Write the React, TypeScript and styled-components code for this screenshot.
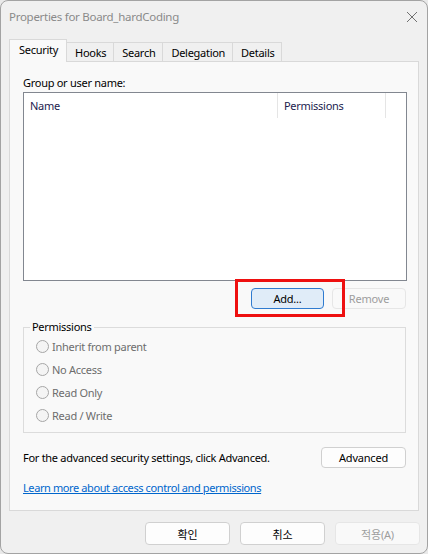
import React from "react";
import styled, { createGlobalStyle, css } from "styled-components";

const GlobalStyle = createGlobalStyle`
  html, body {
    margin: 0;
    padding: 0;
    background: #e9e9e9;
  }
  * {
    box-sizing: border-box;
  }
`;

const FONT = `"Noto Sans", "Noto Sans CJK KR", sans-serif`;

const Window = styled.div`
  width: 428px;
  height: 554px;
  display: flex;
  flex-direction: column;
  background: #f0f0f0;
  border: 1px solid #a3a3a3;
  border-radius: 8px;
  font-family: ${FONT};
  font-size: 11px;
  letter-spacing: -0.28px;
  color: #000;
  overflow: hidden;
`;

const TitleBar = styled.div`
  height: 31px;
  display: flex;
  align-items: center;
  justify-content: space-between;
  padding: 0 9px 0 8px;
  flex-shrink: 0;
`;

const Title = styled.span`
  color: #8a8a8a;
  font-size: 11.5px;
`;

const CloseIcon = () => (
  <svg width="12" height="12" viewBox="0 0 12 12">
    <path d="M1 1 L11 11 M11 1 L1 11" stroke="#707070" strokeWidth="1" />
  </svg>
);

const TabRow = styled.div`
  display: flex;
  align-items: flex-end;
  margin: 7px 0 -1px 8px;
  position: relative;
  z-index: 1;
`;

const Tab = styled.div<{ $active?: boolean }>`
  height: 20px;
  padding: 0 7px 0 8px;
  display: flex;
  align-items: center;
  border: 1px solid #d9d9d9;
  background: #f0f0f0;
  margin-left: -1px;
  white-space: nowrap;
  &:first-child {
    margin-left: 0;
  }
  ${({ $active }) =>
    $active &&
    css`
      height: 23px;
      border-bottom: none;
      background: #f9f9f9;
      padding: 0 8px 3px 9px;
      position: relative;
      z-index: 2;
    `}
`;

const Panel = styled.div`
  height: 450px;
  margin: 0 8px 0 8px;
  border: 1px solid #d9d9d9;
  background: #f9f9f9;
  display: flex;
  flex-direction: column;
  padding: 13px 11px 0 13px;
`;

const Label = styled.div`
  height: 16px;
  line-height: 16px;
`;

const ListBox = styled.div`
  margin-top: 1px;
  height: 189px;
  border: 1px solid #828790;
  background: #fff;
`;

const ListHeader = styled.div`
  display: grid;
  grid-template-columns: 254px 108px 1fr;
  height: 25px;
`;

const HeaderCell = styled.div`
  display: flex;
  align-items: center;
  padding-left: 6px;
  color: #1c1c4e;
  border-right: 1px solid #e5e5e5;
  &:last-child {
    border-right: none;
  }
`;

const ButtonRow = styled.div`
  display: flex;
  justify-content: flex-end;
  gap: 8px;
  margin: 7px 1px 0 0;
`;

const Button = styled.button<{ $variant?: "default" | "accent" | "disabled"; $w: number; $h?: number }>`
  width: ${({ $w }) => $w}px;
  height: ${({ $h }) => $h ?? 21}px;
  font-family: ${FONT};
  font-size: 11px;
  letter-spacing: -0.2px;
  border: 1px solid #d0d0d0;
  border-radius: 4px;
  background: #fdfdfd;
  color: #000;
  padding: 0;
  ${({ $variant }) =>
    $variant === "accent" &&
    css`
      background: #e0ecf8;
      border-color: #2f7bd0;
    `}
  ${({ $variant }) =>
    $variant === "disabled" &&
    css`
      background: #f9f9f9;
      border-color: #e6e6e6;
      color: #9d9d9d;
    `}
`;

const Highlighted = styled.div`
  position: relative;
  display: flex;
`;

const Highlight = styled.span`
  position: absolute;
  left: -16px;
  top: -9px;
  width: 110px;
  height: 38px;
  border: 3px solid #ee1010;
  pointer-events: none;
`;

const GroupBox = styled.div`
  margin: 18px 1px 0 0;
  border: 1px solid #dcdcdc;
  display: flex;
  flex-direction: column;
  padding: 0 0 5px 12px;
`;

const Legend = styled.span`
  align-self: flex-start;
  margin: -9px 0 0 -6px;
  padding: 0 2px;
  height: 16px;
  line-height: 16px;
  background: #f9f9f9;
`;

const RadioRow = styled.div`
  height: 23px;
  display: flex;
  align-items: center;
  gap: 3px;
  color: #6d6d6d;
`;

const RadioCircle = styled.span`
  width: 13px;
  height: 13px;
  border-radius: 50%;
  border: 1px solid #a6a6a6;
  background: #f4f4f4;
`;

const AdvancedRow = styled.div`
  display: flex;
  align-items: center;
  justify-content: space-between;
  margin: 14px 1px 0 0;
`;

const Link = styled.a`
  margin-top: 12px;
  line-height: 16px;
  color: #0066cc;
  text-decoration: underline;
  align-self: flex-start;
  letter-spacing: -0.4px;
`;

const Footer = styled.div`
  display: flex;
  justify-content: flex-end;
  gap: 10px;
  margin: 11px 7px 0 0;
`;

const permissions = ["Inherit from parent", "No Access", "Read Only", "Read / Write"];

export default function App() {
  return (
    <>
      <GlobalStyle />
      <Window>
        <TitleBar>
          <Title>Properties for Board_hardCoding</Title>
          <CloseIcon />
        </TitleBar>
        <TabRow>
          <Tab $active>Security</Tab>
          <Tab>Hooks</Tab>
          <Tab>Search</Tab>
          <Tab>Delegation</Tab>
          <Tab>Details</Tab>
        </TabRow>
        <Panel>
          <Label>Group or user name:</Label>
          <ListBox>
            <ListHeader>
              <HeaderCell>Name</HeaderCell>
              <HeaderCell>Permissions</HeaderCell>
              <HeaderCell />
            </ListHeader>
          </ListBox>
          <ButtonRow>
            <Highlighted>
              <Button $variant="accent" $w={73}>Add...</Button>
              <Highlight />
            </Highlighted>
            <Button $variant="disabled" $w={74}>Remove</Button>
          </ButtonRow>
          <GroupBox>
            <Legend>Permissions</Legend>
            {permissions.map((p) => (
              <RadioRow key={p}>
                <RadioCircle />
                {p}
              </RadioRow>
            ))}
          </GroupBox>
          <AdvancedRow>
            <span>For the advanced security settings, click Advanced.</span>
            <Button $w={85}>Advanced</Button>
          </AdvancedRow>
          <Link href="#">Learn more about access control and permissions</Link>
        </Panel>
        <Footer>
          <Button $w={85} $h={23}>확인</Button>
          <Button $w={85} $h={23}>취소</Button>
          <Button $variant="disabled" $w={85} $h={23}>적용(A)</Button>
        </Footer>
      </Window>
    </>
  );
}
